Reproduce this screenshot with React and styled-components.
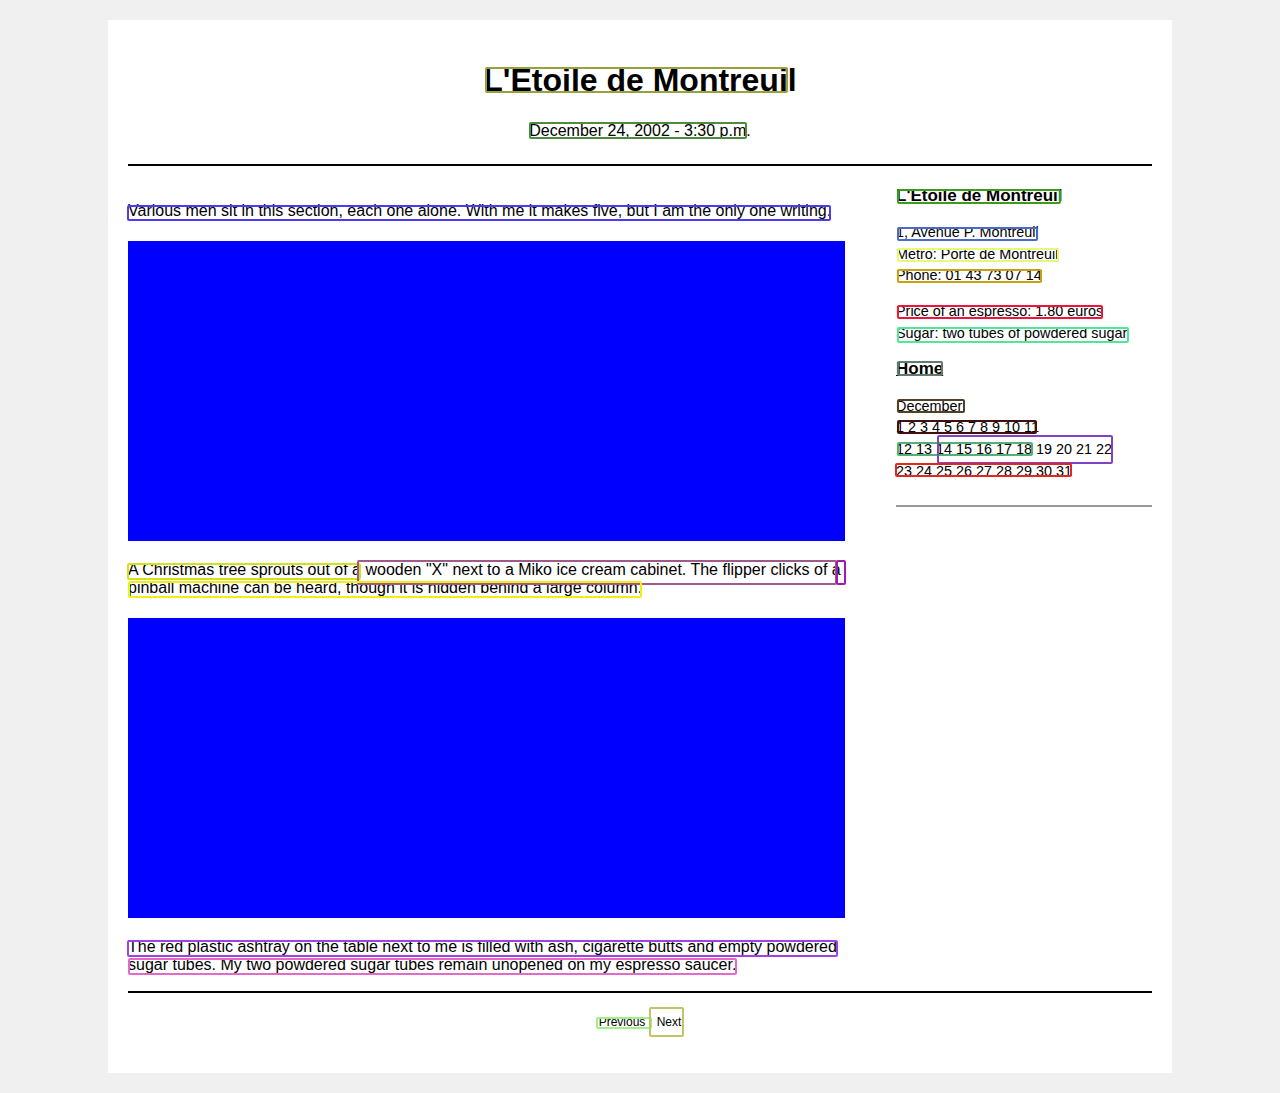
import styled, { createGlobalStyle } from "styled-components";

const GlobalStyle = createGlobalStyle`
  body {
    margin: 0;
    background: #f0f0f0;
    font-family: "Liberation Sans", Arial, sans-serif;
    color: #000;
  }
`;

// outline boxes drawn over the page
const marks = [
  [485, 67, 303, 26, "#9aa03c"],
  [529, 122, 218, 17, "#4c8c3c"],
  [127, 205, 704, 16, "#4b3cf0"],
  [897, 189, 164, 15, "#3c9a1c"],
  [897, 227, 141, 14, "#4a6ac8"],
  [897, 248, 162, 14, "#e6fa7a"],
  [897, 269, 145, 14, "#c8a014"],
  [897, 305, 206, 14, "#f0143c"],
  [897, 327, 232, 16, "#50e898"],
  [897, 361, 46, 15, "#607a70"],
  [897, 399, 68, 14, "#504028"],
  [897, 420, 140, 14, "#401010"],
  [897, 442, 136, 14, "#50b078"],
  [937, 435, 176, 29, "#8440c8"],
  [895, 463, 177, 14, "#e02820"],
  [127, 563, 234, 17, "#d4e01a"],
  [357, 560, 480, 25, "#a05a8a"],
  [836, 560, 10, 25, "#a01ab0"],
  [128, 581, 514, 17, "#f0f010"],
  [127, 940, 711, 17, "#a040e8"],
  [128, 958, 609, 17, "#e868c8"],
  [596, 1017, 56, 12, "#a0f088"],
  [649, 1007, 35, 30, "#c0c468"],
];

const days = (from, to) =>
  Array.from({ length: to - from + 1 }, (_, i) => from + i).join(" ");

export default function App() {
  return (
    <Wrapper>
      <GlobalStyle />
      <Page>
        <Header>
          <Title>L'Etoile de Montreuil</Title>
          <Date>December 24, 2002 - 3:30 p.m.</Date>
        </Header>

        <Content>
          <Main>
            <Text>
              Various men sit in this section, each one alone. With me it makes
              five, but I am the only one writing.
            </Text>
            <Picture />
            <Text>
              A Christmas tree sprouts out of a wooden "X" next to a Miko ice
              cream cabinet. The flipper clicks of a pinball machine can be
              heard, though it is hidden behind a large column.
            </Text>
            <Picture />
            <Text>
              The red plastic ashtray on the table next to me is filled with
              ash, cigarette butts and empty powdered sugar tubes. My two
              powdered sugar tubes remain unopened on my espresso saucer.
            </Text>
          </Main>

          <Sidebar>
            <SideTitle>L'Etoile de Montreuil</SideTitle>
            <Info>
              1, Avenue P. Montreuil
              <br />
              Metro: Porte de Montreuil
              <br />
              Phone: 01 43 73 07 14
            </Info>
            <Info>
              Price of an espresso: 1.80 euros
              <br />
              Sugar: two tubes of powdered sugar
            </Info>
            <SideTitle $gap={17}>
              <HomeLink href="#">Home</HomeLink>
            </SideTitle>
            <Calendar>
              December
              <br />
              {days(1, 11)}
              <br />
              {days(12, 22)}
              <br />
              {days(23, 31)}
            </Calendar>
            <SideRule />
          </Sidebar>
        </Content>

        <Footer>
          <Pager>
            <PageLink>Previous</PageLink> <PageLink>Next</PageLink>
          </Pager>
        </Footer>
      </Page>

      {marks.map(([x, y, w, h, c], i) => (
        <Mark key={i} $x={x} $y={y} $w={w} $h={h} $c={c} />
      ))}
    </Wrapper>
  );
}

const Wrapper = styled.div`
  position: relative;
  padding: 20px 0;
`;

const Page = styled.div`
  width: 1024px;
  margin: 0 auto;
  padding: 20px;
  background: #fff;
`;

const Header = styled.header`
  text-align: center;
  padding-bottom: 10px;
  border-bottom: 2px solid #000;
`;

const Title = styled.h1`
  font-size: 32px;
  font-weight: bold;
  margin: 21.5px 0 0;
`;

const Date = styled.p`
  font-size: 16px;
  margin: 23.5px 0 14px;
`;

const Content = styled.div`
  display: flex;
  justify-content: space-between;
  align-items: flex-start;
  padding-top: 20px;
`;

const Main = styled.div`
  width: 70%;
`;

const Text = styled.p`
  font-size: 16px;
  line-height: 18.5px;
  margin: 16px 0;
`;

const Picture = styled.div`
  height: 300px;
  margin: 20px 0;
  background: #0000ff;
`;

const Sidebar = styled.aside`
  width: 25%;
  font-size: 14.4px;
`;

const SideTitle = styled.h3`
  font-size: 17px;
  font-weight: bold;
  margin: 0 0 ${(p) => p.$gap || 16}px;
`;

const HomeLink = styled.a`
  color: #000;
  text-decoration: underline;
`;

const Info = styled.p`
  line-height: 1.5;
  margin: 0 0 14.4px;
`;

const Calendar = styled.p`
  line-height: 1.5;
  margin: 0;
`;

const SideRule = styled.hr`
  margin: 23px 0 0;
  border: 0;
  height: 2px;
  background: #999;
`;

const Footer = styled.footer`
  border-top: 2px solid #000;
  padding: 22px 0 24px;
  text-align: center;
`;

const Pager = styled.p`
  font-size: 12px;
  margin: 0;
`;

const PageLink = styled.span`
  margin: 0 4px;
`;

const Mark = styled.div`
  position: absolute;
  left: ${(p) => p.$x}px;
  top: ${(p) => p.$y}px;
  width: ${(p) => p.$w}px;
  height: ${(p) => p.$h}px;
  box-sizing: border-box;
  border: 2px solid ${(p) => p.$c};
  border-radius: 2px;
  pointer-events: none;
`;
